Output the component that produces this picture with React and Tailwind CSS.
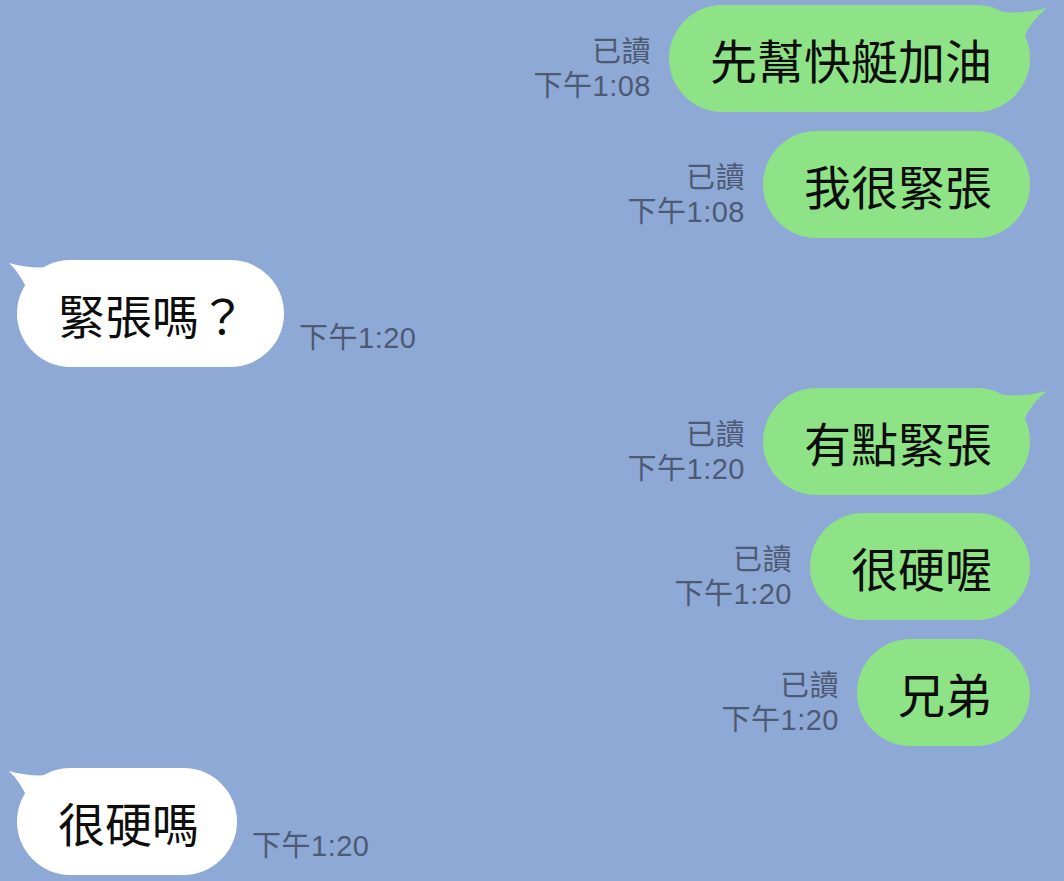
import React from 'react';

const MESSAGES = [
  { id: 1, side: 'out', text: '先幫快艇加油', time: '下午1:08', tail: true, mt: 'mt-[5px]' },
  { id: 2, side: 'out', text: '我很緊張', time: '下午1:08', tail: false, mt: 'mt-[19px]' },
  { id: 3, side: 'in', text: '緊張嗎？', time: '下午1:20', tail: true, mt: 'mt-[22px]' },
  { id: 4, side: 'out', text: '有點緊張', time: '下午1:20', tail: true, mt: 'mt-[21px]' },
  { id: 5, side: 'out', text: '很硬喔', time: '下午1:20', tail: false, mt: 'mt-[18px]' },
  { id: 6, side: 'out', text: '兄弟', time: '下午1:20', tail: false, mt: 'mt-[19px]' },
  { id: 7, side: 'in', text: '很硬嗎', time: '下午1:20', tail: true, mt: 'mt-[22px]' },
];

const metaFont = { fontFamily: '"Liberation Sans", "Noto Sans CJK TC", sans-serif' };
const bodyFont = { fontFamily: '"Noto Sans CJK TC", "Noto Sans CJK SC", sans-serif' };

// speech tail drawn over the bubble's top corner
const Tail = ({ side, color }) =>
  side === 'out' ? (
    <svg className="absolute top-0 right-[-20px] w-[60px] h-[50px]" viewBox="0 0 60 50">
      <path d="M5 6 Q30 10 57 3 Q42 14 33 34 L5 34 Z" fill={color} />
    </svg>
  ) : (
    <svg className="absolute top-0 left-[-10px] w-[55px] h-[50px]" viewBox="0 0 55 50">
      <path d="M50 6 Q26 10 2 3 Q14 14 22 34 L50 34 Z" fill={color} />
    </svg>
  );

const Bubble = ({ msg }) => {
  const out = msg.side === 'out';
  const color = out ? '#8de386' : '#ffffff';
  return (
    <div
      className={`relative h-[107px] flex items-center pl-[41px] pr-[38px] rounded-[54px] ${
        out ? 'bg-[#8de386]' : 'bg-white'
      }`}
    >
      {msg.tail && <Tail side={msg.side} color={color} />}
      <span
        className="relative text-[47px] leading-none text-[#0d0d0d] whitespace-nowrap"
        style={bodyFont}
      >
        {msg.text}
      </span>
    </div>
  );
};

const App = () => {
  return (
    <div className="w-full min-h-[881px] bg-[#8fa9d6] overflow-hidden flex flex-col">
      {MESSAGES.map((msg) =>
        msg.side === 'out' ? (
          <div key={msg.id} className={`flex justify-end items-end pr-[34px] ${msg.mt}`}>
            <div
              className="flex flex-col items-end mr-[18px] mb-[9px] text-[29px] leading-[34px] tracking-[0.5px] text-[#4d5a73]"
              style={metaFont}
            >
              <span>已讀</span>
              <span>{msg.time}</span>
            </div>
            <Bubble msg={msg} />
          </div>
        ) : (
          <div key={msg.id} className={`flex items-end pl-[17px] ${msg.mt}`}>
            <Bubble msg={msg} />
            <span
              className="ml-[15px] mb-[12px] text-[29px] leading-[34px] tracking-[0.5px] text-[#4d5a73]"
              style={metaFont}
            >
              {msg.time}
            </span>
          </div>
        )
      )}
    </div>
  );
};

export default App;
